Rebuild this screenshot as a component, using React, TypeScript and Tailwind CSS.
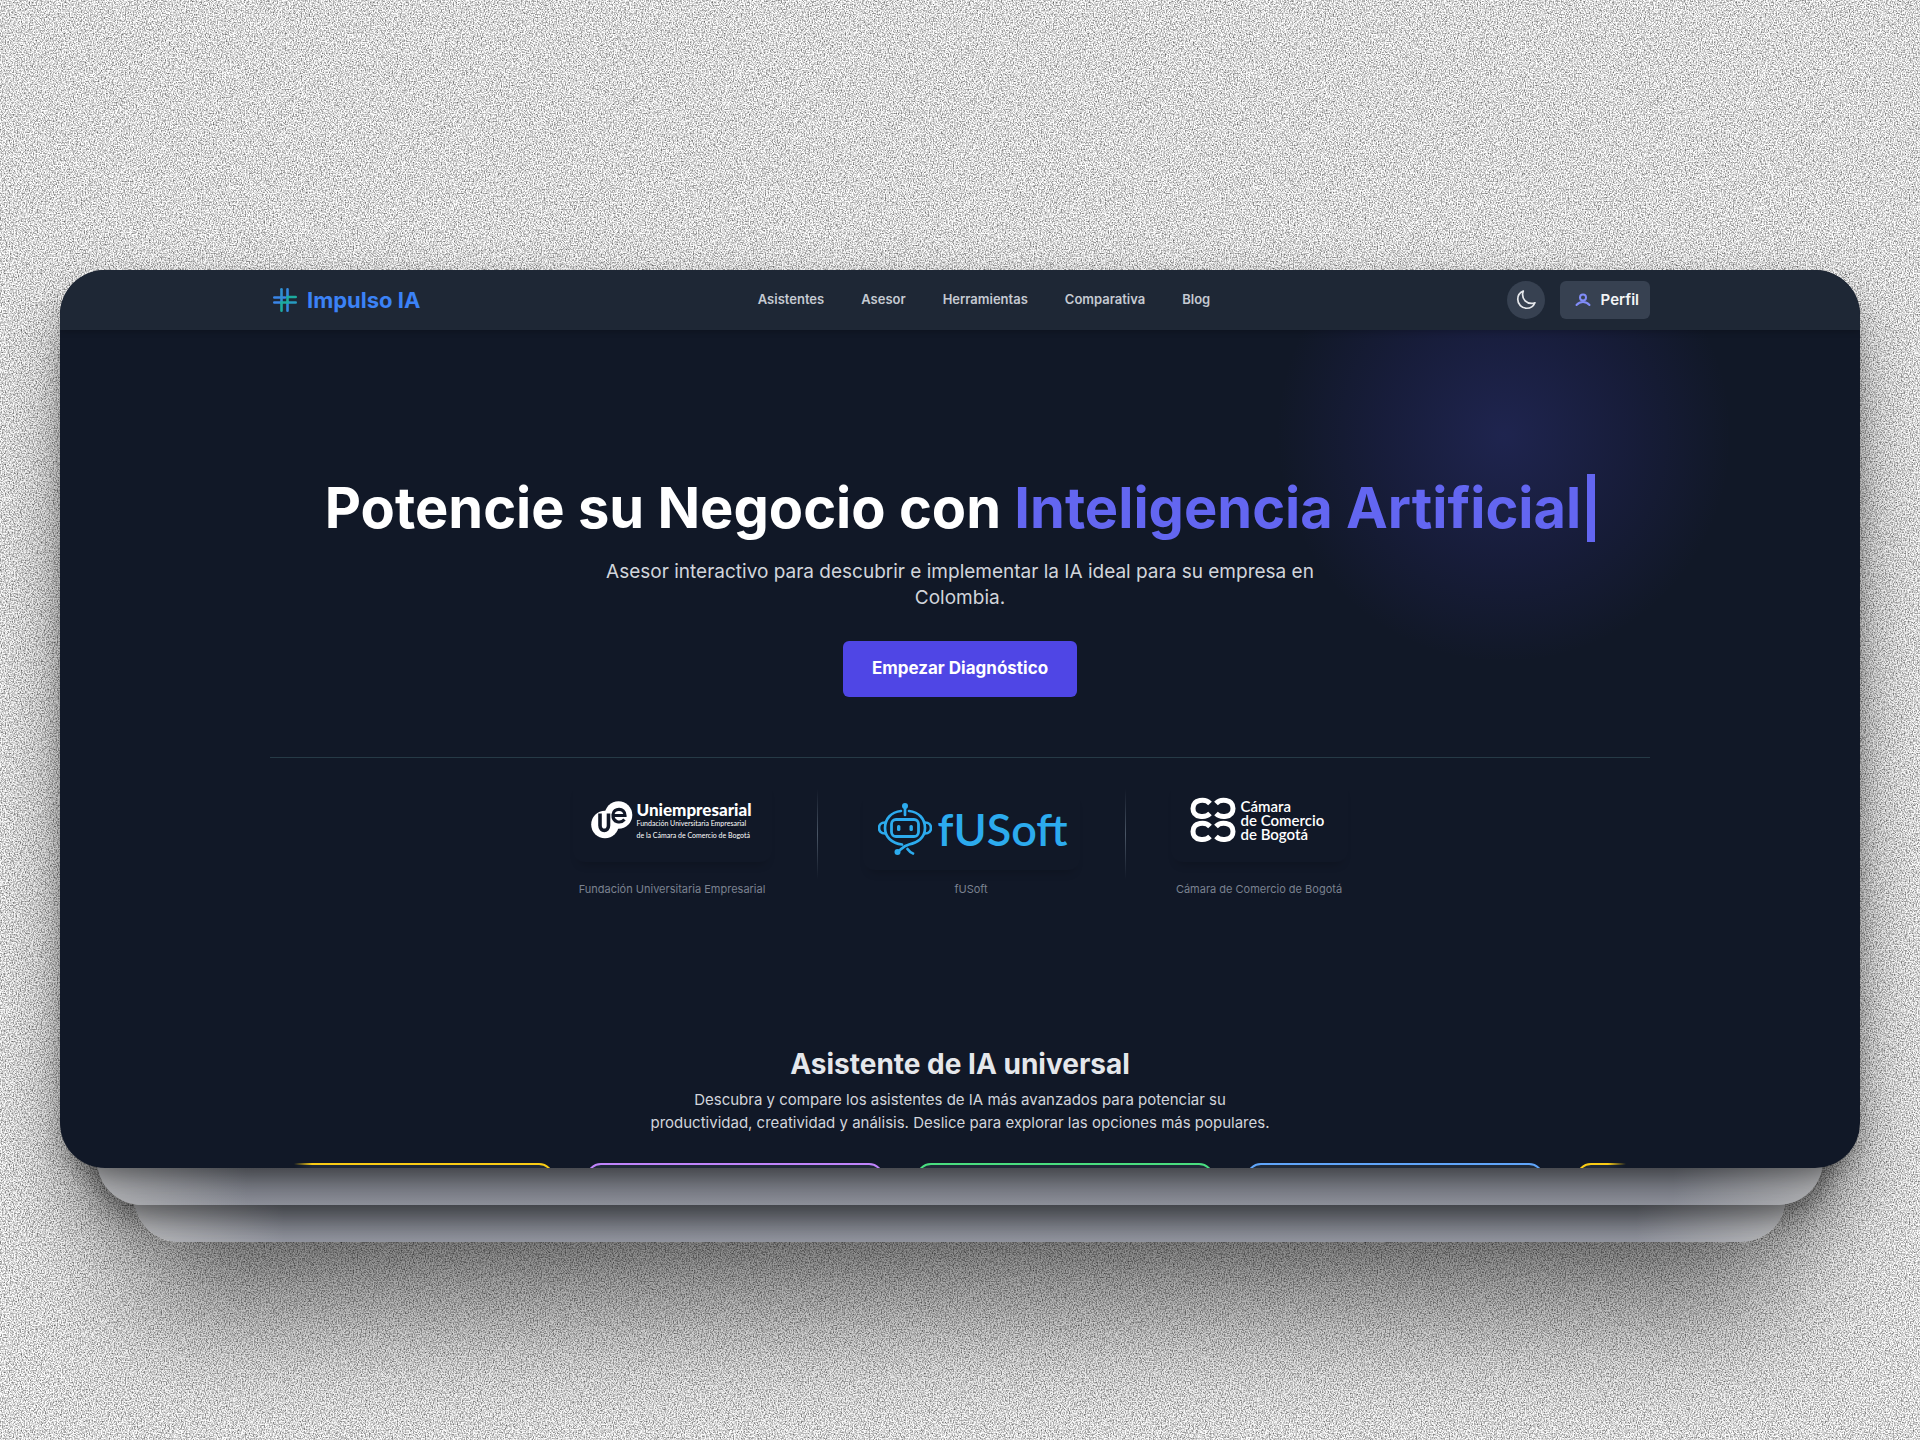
import React from 'react';

const navLinks = ['Asistentes', 'Asesor', 'Herramientas', 'Comparativa', 'Blog'];

function Noise() {
  return (
    <svg className="absolute inset-0 h-full w-full" aria-hidden="true">
      <filter id="grain" x="0" y="0" width="100%" height="100%" colorInterpolationFilters="sRGB">
        <feTurbulence type="fractalNoise" baseFrequency="0.75" numOctaves="4" seed="3" />
        <feColorMatrix values="1.2 0 0 0 0.25  1.2 0 0 0 0.25  1.2 0 0 0 0.25  0 0 0 0 1" />
      </filter>
      <rect width="100%" height="100%" filter="url(#grain)" />
    </svg>
  );
}

function HashLogo() {
  return (
    <svg viewBox="0 0 24 24" className="size-6" fill="none" strokeWidth="2.6" strokeLinecap="round" aria-hidden="true">
      <path d="M1.300 9.500H12M1.300 14.500H9" stroke="#3a86e8" />
      <path d="M8.500 1.300V14.500" stroke="#2f8fd0" />
      <path d="M14.500 14V22.700M14.500 1.300V9" stroke="#3488e0" />
      <path d="M14.500 14.500H22.700" stroke="#279bc0" />
      <path d="M22.700 9H14.500V14.500H8.500V22.700" stroke="#1cab9f" />
    </svg>
  );
}

function ProfileIcon() {
  return (
    <svg viewBox="0 0 16 14" className="h-[14px] w-4" fill="none" stroke="#818cf8" strokeWidth="2" strokeLinecap="round" aria-hidden="true">
      <circle cx="8" cy="4.500" r="3" />
      <path d="M1.500 12C3.500 9.800 5.600 9 8 9s4.500.800 6.500 3" />
    </svg>
  );
}

function MoonIcon() {
  return (
    <svg viewBox="0 0 24 24" className="size-[22px]" fill="none" stroke="#e5e7eb" strokeWidth="1.900" strokeLinecap="round" strokeLinejoin="round" aria-hidden="true">
      <path d="M21.752 15.002A9.720 9.720 0 0 1 18 15.750c-5.385 0-9.750-4.365-9.750-9.750 0-1.330.266-2.597.748-3.752A9.753 9.753 0 0 0 3 11.250C3 16.635 7.365 21 12.750 21a9.753 9.753 0 0 0 9.002-5.998Z" />
    </svg>
  );
}

function UeMark() {
  return (
    <svg viewBox="0 0 42 38" className="h-[38px] w-[42px] shrink-0" fill="none" aria-hidden="true">
      <circle cx="27.500" cy="14" r="13.800" fill="#fff" />
      <circle cx="14" cy="23.500" r="13.800" fill="#fff" />
      <path d="M9 12.500V24.500C9 31 17.500 31 17.500 24.500V12.500" stroke="#111827" strokeWidth="3.600" />
      <path d="M22 14.500H34C34 6.500 22.500 6.500 22 13.500C21.500 22 30 22.500 33.500 18.500" stroke="#111827" strokeWidth="3.200" />
    </svg>
  );
}

function RobotMark() {
  return (
    <svg viewBox="0 0 54 54" className="size-[54px] shrink-0" fill="none" stroke="#2cabee" strokeWidth="2.700" strokeLinecap="round" aria-hidden="true">
      <path d="M23 9C13 10 7 17 7 26c0 9 7 15.500 17 16.500M31 9c10 1 16 8 16 17 0 10-8 15-16 16.500-6 1.500-8 5-11 7" />
      <path d="M7 20.500c-8 0-8 11 0 11M47 20.500c8 0 8 11 0 11" />
      <rect x="13.500" y="17.500" width="27" height="17" rx="4.500" strokeWidth="2.800" />
      <path d="M27 4V13" />
      <circle cx="27" cy="4" r="3" fill="#2cabee" stroke="none" />
      <circle cx="19.500" cy="50" r="3" fill="#2cabee" stroke="none" />
      <path d="M29.500 47C31 49 33 51 35 51.500" strokeWidth="2.800" />
      <rect x="19" y="23" width="3.400" height="6" rx="1.500" fill="#2cabee" stroke="none" />
      <rect x="31.500" y="23" width="3.400" height="6" rx="1.500" fill="#2cabee" stroke="none" />
    </svg>
  );
}

function CamaraMark() {
  return (
    <svg viewBox="0 0 46 46" className="size-[46px] shrink-0" fill="none" stroke="#fff" strokeWidth="5" aria-hidden="true">
      <path d="M20 6.500C15.500 1.500 3 2 3 11.500S15.500 21 20 16.500" />
      <path d="M26 6.500C30.500 1.500 43 2 43 11.500S30.500 21 26 16.500" />
      <path d="M20 29.500C15.500 24.500 3 25 3 34.500S15.500 44 20 39.500" />
      <path d="M26 29.500C30.500 24.500 43 25 43 34.500S30.500 44 26 39.500" />
    </svg>
  );
}

function Divider() {
  return <div className="mt-[11px] h-[90px] w-px bg-linear-to-b from-transparent via-gray-600 to-transparent" />;
}

function Partner({ caption, children, className }: { caption: string; children: React.ReactNode; className: string }) {
  return (
    <figure className="flex flex-col items-center justify-between">
      <div className={`flex items-center rounded-xl shadow-[0_8px_10px_-6px_rgba(0,0,0,0.2)] ${className}`}>{children}</div>
      <figcaption className="text-[11px] leading-4 whitespace-nowrap text-[#7b8290]">{caption}</figcaption>
    </figure>
  );
}

function Header() {
  return (
    <header className="relative z-10 bg-[#1e2735] shadow-[0_2px_6px_rgba(0,0,0,0.2)]">
      <div className="mx-auto grid h-[60px] w-[1380px] max-w-full grid-cols-[1fr_auto_1fr] items-center">
        <a href="#inicio" className="flex items-center gap-[10px] pl-[3px] text-[22px] font-bold text-[#3b82f6]">
          <HashLogo />
          Impulso IA
        </a>
        <nav className="flex gap-[37px] pl-[48px] text-[13px] font-semibold text-[#c5cad2]">
          {navLinks.map((label) => (
            <a key={label} href={`#${label.toLowerCase()}`}>{label}</a>
          ))}
        </nav>
        <div className="flex items-center justify-end gap-[15px]">
          <button type="button" aria-label="Cambiar tema" className="flex size-[38px] items-center justify-center rounded-full bg-[#374151]">
            <MoonIcon />
          </button>
          <button type="button" className="flex h-[38px] items-center gap-[10px] rounded-md bg-[#374151] pr-[11px] pl-[15px] text-[15px] font-semibold text-gray-100">
            <ProfileIcon />
            Perfil
          </button>
        </div>
      </div>
    </header>
  );
}

function Hero() {
  return (
    <section className="mx-auto w-[1380px] max-w-full pt-[143px] text-center">
      <h1 className="flex items-center justify-center text-[56px] leading-[70px] font-bold whitespace-nowrap text-white">
        <span>
          Potencie su Negocio con <span className="text-[#6366f1]">Inteligencia Artificial</span>
        </span>
        <span className="ml-[6px] h-[68px] w-2 bg-[#6366f1]" />
      </h1>
      <p className="mx-auto mt-4 w-[720px] max-w-full text-[19px] leading-[26px] text-gray-300">
        Asesor interactivo para descubrir e implementar la IA ideal para su empresa en Colombia.
      </p>
      <button type="button" className="mt-[30px] h-14 rounded-md bg-[#4f46e5] px-[29px] text-[17px] font-bold text-white">
        Empezar Diagnóstico
      </button>
    </section>
  );
}

function Partners() {
  return (
    <section className="mx-auto mt-[60px] w-[1380px] max-w-full border-t border-[#263a46] pt-[20px]">
      <div className="flex h-[119px] justify-center gap-[45px]">
        <Partner caption="Fundación Universitaria Empresarial" className="h-[84px] w-[199px] px-[18px]">
          <UeMark />
          <div className="ml-1 text-left text-white">
            <p className="font-[Lato] text-[17px] leading-[18px] font-black">Uniempresarial</p>
            <p className="font-[Lato] text-[7px] leading-[8px] whitespace-nowrap">Fundación Universitaria Empresarial</p>
            <p className="mt-1 font-[Lato] text-[7px] leading-[8px] whitespace-nowrap">de la Cámara de Comercio de Bogotá</p>
          </div>
        </Partner>
        <Divider />
        <Partner caption="fUSoft" className="mt-[10px] h-[82px] w-[217px] px-[15px]">
          <RobotMark />
          <span className="ml-[6px] font-[Lato] text-[45px] leading-none font-semibold text-[#2cabee]">fUSoft</span>
        </Partner>
        <Divider />
        <Partner caption="Cámara de Comercio de Bogotá" className="h-[84px] w-[177px] px-[19px]">
          <CamaraMark />
          <p className="ml-[5px] font-[Lato] text-[15px] leading-[14px] font-semibold whitespace-nowrap text-white">
            Cámara<br />de Comercio<br />de Bogotá
          </p>
        </Partner>
      </div>
    </section>
  );
}

const tile = 'h-40 w-[298px] shrink-0 rounded-[15px] border-2 bg-[#1f2937]';

function Assistants() {
  return (
    <section className="mt-[149px] text-center">
      <h2 className="text-[28px] leading-9 font-bold text-gray-200">Asistente de IA universal</h2>
      <p className="mx-auto mt-[6px] w-[630px] max-w-full text-[15px] leading-[23px] text-gray-300">
        Descubra y compare los asistentes de IA más avanzados para potenciar su productividad, creatividad y análisis. Deslice para explorar las opciones más populares.
      </p>
      <div className="mx-auto mt-[29px] flex w-[1332px] max-w-full gap-8 overflow-hidden mask-[linear-gradient(to_right,transparent,black_18px,black_calc(100%-18px),transparent)]">
        <div className={`${tile} -ml-[38px] border-[#facc15]`} />
        <div className={`${tile} border-[#c084fc]`} />
        <div className={`${tile} border-[#4ade80]`} />
        <div className={`${tile} border-[#60a5fa]`} />
        <div className={`${tile} border-[#facc15]`} />
      </div>
    </section>
  );
}

const sheet =
  'absolute rounded-[45px] bg-[linear-gradient(to_right,#c8c9cc,transparent_150px,transparent_calc(100%-150px),#c8c9cc),linear-gradient(to_top,#a0a3ae,#7f838d_37px)]';

export default function App() {
  return (
    <div className="relative isolate min-h-screen overflow-hidden pt-[270px] font-[Inter,sans-serif]">
      <Noise />
      <div className="relative mx-[60px]">
        <div className={`${sheet} inset-x-[74px] top-20 -bottom-[74px] shadow-[0_70px_130px_rgba(0,0,0,0.5)]`} />
        <div className={`${sheet} inset-x-[37px] top-10 -bottom-[37px] shadow-[0_10px_24px_rgba(0,0,0,0.35),0_20px_60px_rgba(0,0,0,0.2)]`} />
        <main className="relative h-[898px] overflow-hidden rounded-[45px] bg-[#111827] shadow-[0_12px_24px_-6px_rgba(0,0,0,0.4),0_36px_70px_rgba(0,0,0,0.25)]">
          <div className="absolute top-[-65px] right-[126px] size-[460px] rounded-full bg-[radial-gradient(circle,rgba(79,80,220,0.22),rgba(79,70,229,0.1)_38%,transparent_70%)]" />
          <div className="relative">
            <Header />
            <Hero />
            <Partners />
            <Assistants />
          </div>
        </main>
      </div>
    </div>
  );
}
